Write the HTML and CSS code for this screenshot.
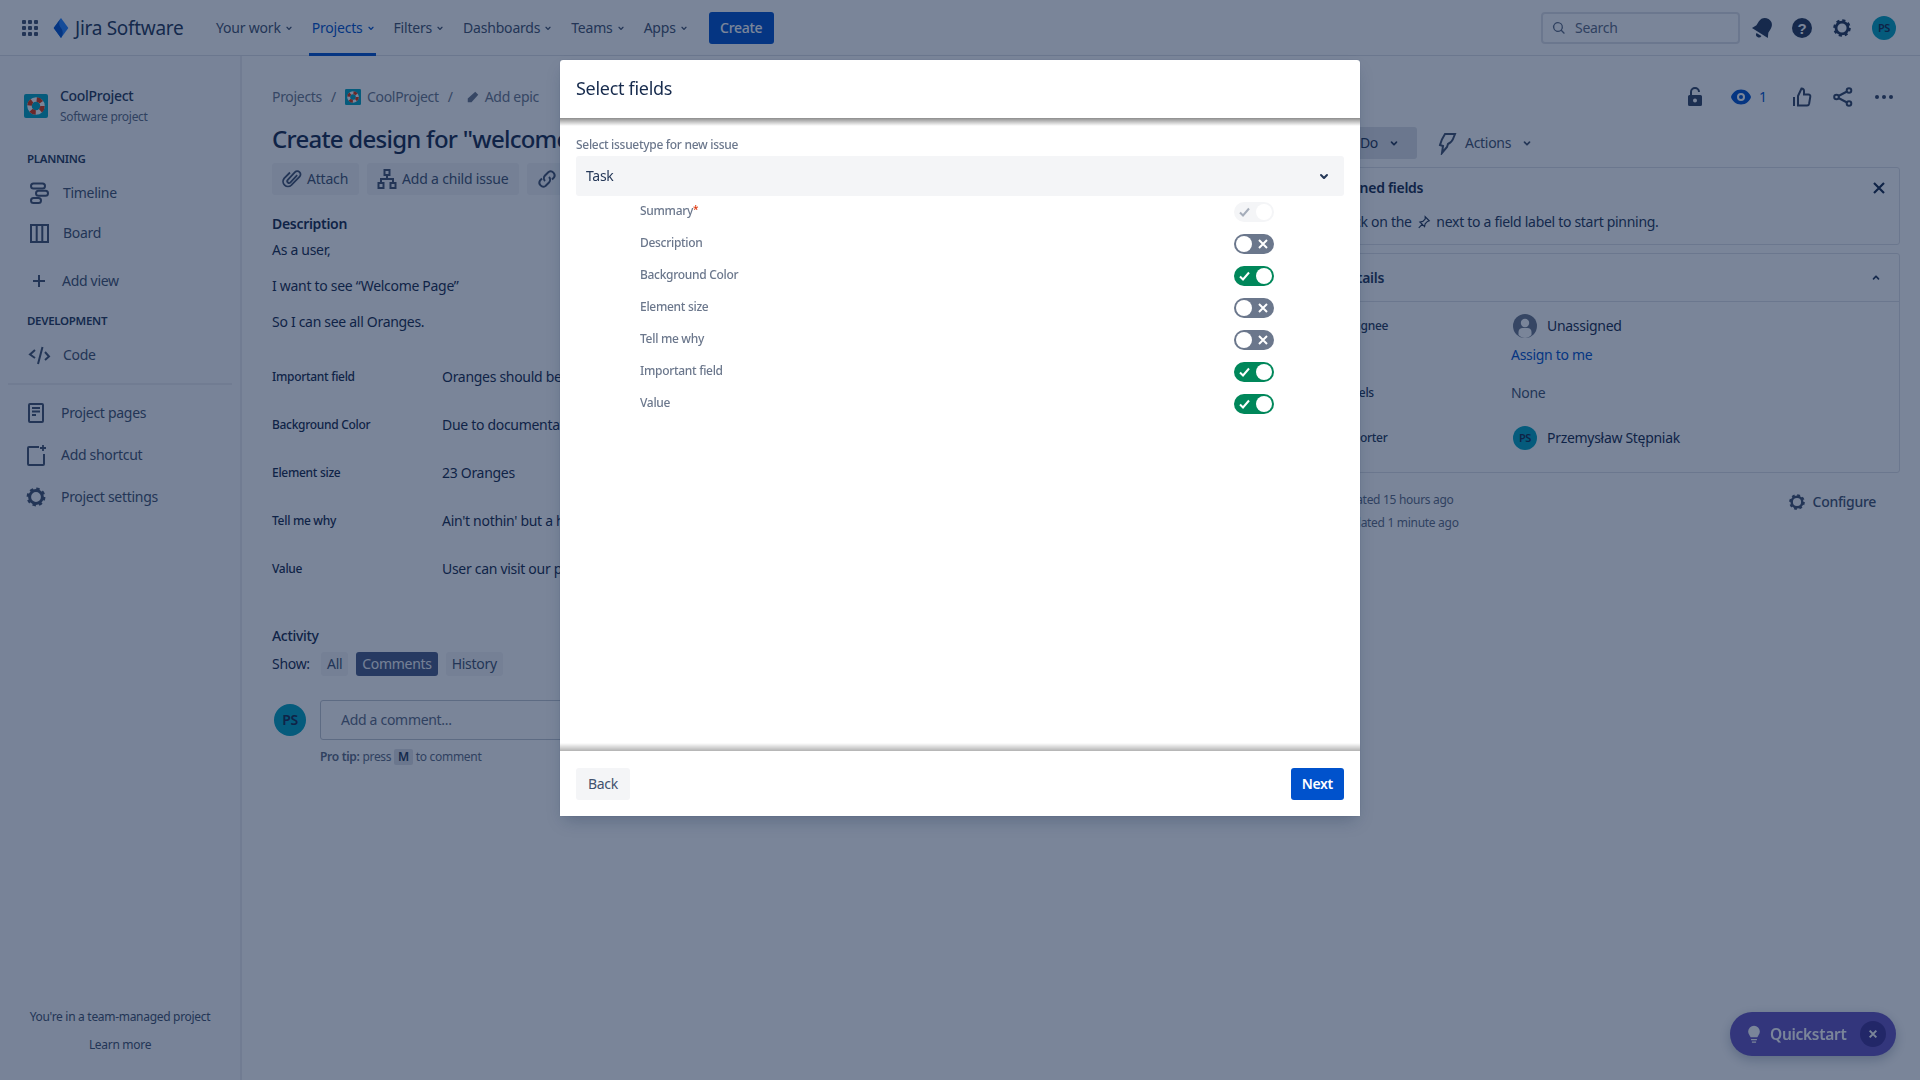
FILE: index.html
```html
<!DOCTYPE html>
<html lang="en">
<head>
  <meta charset="UTF-8">
  <title>Jira Software - Select fields</title>
  <link rel="stylesheet" href="styles.css">
</head>
<body>
  <svg class="defs" aria-hidden="true">
    <symbol id="i-chevron" viewBox="0 0 24 24"><path d="M8.3 10.3a1 1 0 0 0 0 1.4l2.9 3c.2.2.5.3.8.3s.6-.1.8-.3l2.9-3a1 1 0 0 0 0-1.4 1 1 0 0 0-1.4 0L12 12.6l-2.3-2.3a1 1 0 0 0-1.4 0z" fill="currentColor"/></symbol>
    <symbol id="i-gear" viewBox="0 0 24 24"><circle cx="12" cy="12" r="6.4" fill="none" stroke="currentColor" stroke-width="3"/><circle cx="12" cy="12" r="8.2" fill="none" stroke="currentColor" stroke-width="2.4" stroke-dasharray="3.4 3.04"/></symbol>
    <symbol id="i-project" viewBox="0 0 24 24"><rect width="24" height="24" rx="2" fill="#00A3BF"/><circle cx="12" cy="12" r="6.5" fill="none" stroke="#fff" stroke-width="4.5"/><circle cx="12" cy="12" r="6.5" fill="none" stroke="#DE350B" stroke-width="4.5" stroke-dasharray="5.2 5"/></symbol>
  </svg>

  <header class="topbar">
    <svg class="apps" viewBox="0 0 16 16" width="16" height="16"><g fill="currentColor"><rect width="4" height="4" rx="1"/><rect x="6" width="4" height="4" rx="1"/><rect x="12" width="4" height="4" rx="1"/><rect y="6" width="4" height="4" rx="1"/><rect x="6" y="6" width="4" height="4" rx="1"/><rect x="12" y="6" width="4" height="4" rx="1"/><rect y="12" width="4" height="4" rx="1"/><rect x="6" y="12" width="4" height="4" rx="1"/><rect x="12" y="12" width="4" height="4" rx="1"/></g></svg>
    <div class="brand">
      <svg viewBox="0 0 18 24" width="18" height="22"><path d="M9 1 17 12 9 23 1 12z" fill="#2684FF"/><path d="M9 1 1 12l8 11c2-3 3-7 0-11-3-4-2-8 0-11z" fill="#0052CC"/></svg>
      <span>Jira Software</span>
    </div>
    <nav class="nav">
      <a class="nav-item">Your work<svg class="chev"><use href="#i-chevron"/></svg></a>
      <a class="nav-item active">Projects<svg class="chev"><use href="#i-chevron"/></svg></a>
      <a class="nav-item">Filters<svg class="chev"><use href="#i-chevron"/></svg></a>
      <a class="nav-item">Dashboards<svg class="chev"><use href="#i-chevron"/></svg></a>
      <a class="nav-item">Teams<svg class="chev"><use href="#i-chevron"/></svg></a>
      <a class="nav-item">Apps<svg class="chev"><use href="#i-chevron"/></svg></a>
    </nav>
    <button class="btn-create">Create</button>
    <div class="top-right">
      <div class="search">
        <svg viewBox="0 0 24 24" width="16" height="16"><path d="M16.4 15.1l4 4a1 1 0 0 1-1.4 1.4l-4-4a7.5 7.5 0 1 1 1.4-1.4zM10.5 16a5.5 5.5 0 1 0 0-11 5.5 5.5 0 0 0 0 11z" fill="currentColor"/></svg>
        <span>Search</span>
      </div>
      <svg class="top-icon bell" viewBox="0 0 24 24"><g transform="rotate(32 12 12)" fill="currentColor"><path d="M12 3c-3.500 0-6 2.500-6 6v4l-2 4h16l-2-4V9c0-3.500-2.500-6-6-6z"/><path d="M9.500 18.500a2.500 2.500 0 0 0 5 0z"/></g></svg>
      <svg class="top-icon" viewBox="-2 -2 28 28"><circle cx="12" cy="12" r="10" fill="currentColor"/><text x="12" y="17.500" class="help-mark">?</text></svg>
      <svg class="top-icon gear" viewBox="-3 -3 30 30"><use href="#i-gear" width="24" height="24"/></svg>
      <div class="avatar small">PS</div>
    </div>
  </header>

  <div class="page">
    <aside class="sidebar">
      <div class="project">
        <svg width="24" height="24"><use href="#i-project"/></svg>
        <div>
          <div class="project-name">CoolProject</div>
          <div class="project-type">Software project</div>
        </div>
      </div>
      <div class="side-title">PLANNING</div>
      <a class="side-item">
        <svg viewBox="0 0 24 24" width="24" height="24"><g fill="none" stroke="currentColor" stroke-width="2"><rect x="4" y="2.500" width="14" height="5" rx="2.500"/><rect x="9" y="9.800" width="12" height="5" rx="2.500"/><rect x="4" y="17" width="10" height="5" rx="2.500"/></g></svg>
        Timeline
      </a>
      <a class="side-item">
        <svg viewBox="0 0 24 24" width="24" height="24"><path d="M4 4h17v17H4zM9.700 4v17M15.300 4v17" fill="none" stroke="currentColor" stroke-width="2"/></svg>
        Board
      </a>
      <a class="side-item add-view">
        <svg viewBox="0 0 24 24" width="24" height="24"><path d="M12 6v12M6 12h12" stroke="currentColor" stroke-width="2"/></svg>
        Add view
      </a>
      <div class="side-title dev">DEVELOPMENT</div>
      <a class="side-item">
        <svg viewBox="0 0 24 24" width="24" height="24"><path d="M8 7l-5 4.500L8 15M15.500 4 11 21M18 9l4 4.500-4 3.500" fill="none" stroke="currentColor" stroke-width="2"/></svg>
        Code
      </a>
      <div class="side-divider"></div>
      <a class="side-item tall">
        <svg viewBox="0 0 24 24" width="24" height="24"><path d="M6 3h12a1 1 0 0 1 1 1v16a1 1 0 0 1-1 1H6a1 1 0 0 1-1-1V4a1 1 0 0 1 1-1z" fill="none" stroke="currentColor" stroke-width="2"/><path d="M8 7h8M8 10.500h8M8 14h4" stroke="currentColor" stroke-width="1.800"/></svg>
        Project pages
      </a>
      <a class="side-item tall">
        <svg viewBox="0 0 24 24" width="24" height="24"><path d="M15 4H5a1 1 0 0 0-1 1v16a1 1 0 0 0 1 1h14a1 1 0 0 0 1-1V11" fill="none" stroke="currentColor" stroke-width="2"/><path d="M19 2v6M16 5h6" stroke="currentColor" stroke-width="1.800"/></svg>
        Add shortcut
      </a>
      <a class="side-item tall">
        <svg width="24" height="24"><use href="#i-gear"/></svg>
        Project settings
      </a>
      <div class="side-foot">
        <div>You're in a team-managed project</div>
        <div class="learn">Learn more</div>
      </div>
    </aside>

    <main class="issue">
      <div class="crumbs">
        <span>Projects</span><i>/</i>
        <svg width="16" height="16"><use href="#i-project"/></svg><span>CoolProject</span><i class="last">/</i>
        <svg viewBox="0 0 16 16" width="12" height="12"><path d="M11 1l4 4-9 10-5 0 0-5z" fill="currentColor"/></svg><span>Add epic</span>
      </div>
      <h1 class="title">Create design for "welcome page"</h1>
      <div class="actions">
        <button class="btn">
          <svg viewBox="0 0 24 24" width="24" height="24"><path d="M18 8l-7.500 8a2 2 0 0 1-3-2.800l8-8.600a3.600 3.600 0 0 1 5.200 5L11.500 19a5.500 5.500 0 0 1-8-7.500L10 5" fill="none" stroke="currentColor" stroke-width="2" transform="translate(1 1) scale(.9)"/></svg>
          Attach
        </button>
        <button class="btn">
          <svg viewBox="0 0 24 24" width="24" height="24"><path d="M9.500 3h5v5h-5zM3.500 16h5v5h-5zM15.500 16h5v5h-5zM12 8v4M6 16v-4h12v4" fill="none" stroke="currentColor" stroke-width="2"/></svg>
          Add a child issue
        </button>
        <button class="btn">
          <svg viewBox="0 0 24 24" width="24" height="24"><path d="M10 14a4 4 0 0 1 0-5.500l3.500-3.500a4 4 0 0 1 5.500 5.500l-2 2M14 10a4 4 0 0 1 0 5.500L10.500 19A4 4 0 0 1 5 13.500l2-2" fill="none" stroke="currentColor" stroke-width="2"/></svg>
        </button>
      </div>
      <h2 class="desc-title">Description</h2>
      <p class="first">As a user,</p>
      <p>I want to see “Welcome Page”</p>
      <p>So I can see all Oranges.</p>
      <dl class="fields">
        <div class="field"><dt>Important field</dt><dd>Oranges should be visible</dd></div>
        <div class="field"><dt>Background Color</dt><dd>Due to documentation</dd></div>
        <div class="field"><dt>Element size</dt><dd>23 Oranges</dd></div>
        <div class="field"><dt>Tell me why</dt><dd>Ain't nothin' but a heartache</dd></div>
        <div class="field"><dt>Value</dt><dd>User can visit our page</dd></div>
      </dl>
      <h2 class="activity">Activity</h2>
      <div class="show">
        <span>Show:</span>
        <button class="tab">All</button>
        <button class="tab on">Comments</button>
        <button class="tab">History</button>
      </div>
      <div class="comment">
        <div class="avatar">PS</div>
        <div class="comment-box">Add a comment...</div>
      </div>
      <div class="tip"><b>Pro tip:</b> press <kbd>M</kbd> to comment</div>
    </main>

    <section class="panel">
      <div class="panel-icons">
        <svg class="p-icon lock" viewBox="0 0 24 24"><path d="M8 11V7a4 4 0 0 1 8 0" fill="none" stroke="currentColor" stroke-width="2"/><path d="M6.500 10h11a1.500 1.500 0 0 1 1.500 1.500v8a1.500 1.500 0 0 1-1.500 1.500h-11A1.500 1.500 0 0 1 5 19.500v-8A1.500 1.500 0 0 1 6.500 10zM12 13.500a2 2 0 1 0 0 4 2 2 0 0 0 0-4z" fill="currentColor" fill-rule="evenodd"/></svg>
        <div class="watch">
          <svg class="p-icon" viewBox="0 0 24 24"><path d="M12 4.500c5 0 9 3.600 10 7.500-1 3.900-5 7.500-10 7.500S3 15.900 2 12c1-3.900 5-7.500 10-7.500zM12 8a4 4 0 1 0 0 8 4 4 0 0 0 0-8z" fill="#0052CC" fill-rule="evenodd"/><circle cx="12" cy="12" r="2" fill="#0052CC"/></svg>
          <span>1</span>
        </div>
        <svg class="p-icon" viewBox="0 0 24 24"><path d="M8 11l3.500-7.500c1.500 0 2.500 1 2.500 2.500v3.500h4.500c1.200 0 2 1 1.800 2.200l-1.200 7c-.2 1-1 1.800-2 1.800H8zM4 12v9" fill="none" stroke="currentColor" stroke-width="2"/></svg>
        <svg class="p-icon" viewBox="0 0 24 24"><circle cx="18" cy="5.500" r="2.300" fill="none" stroke="currentColor" stroke-width="2"/><circle cx="5.500" cy="12" r="2.300" fill="none" stroke="currentColor" stroke-width="2"/><circle cx="18" cy="18.500" r="2.300" fill="none" stroke="currentColor" stroke-width="2"/><path d="M7.500 11l8.500-4.500M7.500 13l8.500 4.500" stroke="currentColor" stroke-width="2"/></svg>
        <svg class="p-icon" viewBox="0 0 24 24"><circle cx="5" cy="12" r="2" fill="currentColor"/><circle cx="12" cy="12" r="2" fill="currentColor"/><circle cx="19" cy="12" r="2" fill="currentColor"/></svg>
      </div>
      <div class="status-row">
        <button class="status">To Do<svg class="chev big"><use href="#i-chevron"/></svg></button>
        <div class="act">
          <svg viewBox="0 0 24 24" width="24" height="24"><path d="M10 3h10l-2 5c-1 3-3 4-5 5l-1 3-5 6 1-7-3-1c1-4 3-8 5-11z" fill="none" stroke="currentColor" stroke-width="2"/></svg>
          Actions<svg class="chev big"><use href="#i-chevron"/></svg>
        </div>
      </div>
      <div class="box pinned">
        <div class="box-head">
          <b>Pinned fields</b>
          <svg viewBox="0 0 24 24" width="20" height="20"><path d="M6 6l12 12M18 6 6 18" stroke="currentColor" stroke-width="2.600"/></svg>
        </div>
        <div class="pin-text">Click on the
          <svg viewBox="0 0 24 24" width="14" height="14"><path d="M14 3l7 7-3 1-4 4-1 5-4-4-6 6 6-6-4-4 5-1 4-4z" fill="none" stroke="currentColor" stroke-width="2"/></svg>
          next to a field label to start pinning.</div>
      </div>
      <div class="box details">
        <div class="details-head">
          <b>Details</b>
          <svg class="flip" viewBox="0 0 24 24" width="20" height="20"><use href="#i-chevron"/></svg>
        </div>
        <div class="d-row assignee">
          <span class="d-label">Assignee</span>
          <span class="who">
            <svg viewBox="0 0 24 24" width="24" height="24"><circle cx="12" cy="12" r="12" fill="#6B778C"/><circle cx="12" cy="9" r="4.200" fill="#fff"/><path d="M5.500 21v-3c0-2.500 2-4 4-4h5c2 0 4 1.500 4 4v3c-2 2-4 3-6.500 3s-4.500-1-6.500-3z" fill="#fff"/></svg>
            Unassigned
          </span>
        </div>
        <a class="assign">Assign to me</a>
        <div class="d-row labels"><span class="d-label">Labels</span><span class="none">None</span></div>
        <div class="d-row reporter">
          <span class="d-label">Reporter</span>
          <span class="who"><span class="avatar small">PS</span>Przemysław Stępniak</span>
        </div>
      </div>
      <div class="dates">
        <div>
          <div>Created 15 hours ago</div>
          <div class="updated">Updated 1 minute ago</div>
        </div>
        <div class="configure"><svg width="20" height="20"><use href="#i-gear"/></svg>Configure</div>
      </div>
    </section>
  </div>

  <div class="quickstart">
    <svg viewBox="0 0 24 24" width="20" height="24"><path d="M12 2a7 7 0 0 0-7 7c0 3 2 4.500 3 7h8c1-2.500 3-4 3-7a7 7 0 0 0-7-7zM8.500 18h7v1.500h-7zM9.500 21h5v1.500h-5z" fill="currentColor"/></svg>
    <span>Quickstart</span>
    <div class="q-close"><svg viewBox="0 0 24 24" width="16" height="16"><path d="M7 7l10 10M17 7 7 17" stroke="currentColor" stroke-width="3"/></svg></div>
  </div>

  <div class="overlay"></div>

  <div class="modal">
    <div class="modal-head">Select fields</div>
    <div class="modal-body">
      <label class="select-label">Select issuetype for new issue</label>
      <div class="select">Task<svg width="24" height="24"><use href="#i-chevron"/></svg></div>
      <div class="toggle-row"><span>Summary<em>*</em></span><div class="toggle disabled"><svg viewBox="0 0 16 16"><path d="M3 8.500l3 3 6-7"/></svg></div></div>
      <div class="toggle-row"><span>Description</span><div class="toggle off"><svg viewBox="0 0 16 16"><path d="M4 4l8 8M12 4l-8 8"/></svg></div></div>
      <div class="toggle-row"><span>Background Color</span><div class="toggle on"><svg viewBox="0 0 16 16"><path d="M3 8.500l3 3 6-7"/></svg></div></div>
      <div class="toggle-row"><span>Element size</span><div class="toggle off"><svg viewBox="0 0 16 16"><path d="M4 4l8 8M12 4l-8 8"/></svg></div></div>
      <div class="toggle-row"><span>Tell me why</span><div class="toggle off"><svg viewBox="0 0 16 16"><path d="M4 4l8 8M12 4l-8 8"/></svg></div></div>
      <div class="toggle-row"><span>Important field</span><div class="toggle on"><svg viewBox="0 0 16 16"><path d="M3 8.500l3 3 6-7"/></svg></div></div>
      <div class="toggle-row"><span>Value</span><div class="toggle on"><svg viewBox="0 0 16 16"><path d="M3 8.500l3 3 6-7"/></svg></div></div>
    </div>
    <div class="modal-foot">
      <button class="btn-back">Back</button>
      <button class="btn-next">Next</button>
    </div>
  </div>
</body>
</html>
```

FILE: styles.css
```css
* {
  box-sizing: border-box;
}
html, body {
  height: 100%;
}
body {
  margin: 0;
  overflow: hidden;
  background: #fff;
  color: #172b4d;
  font-family: "Noto Sans", sans-serif;
  font-size: 14px;
  line-height: 20px;
  letter-spacing: -0.3px;
}
button {
  font: inherit;
  letter-spacing: inherit;
  border: 0;
}
.defs {
  display: none;
}
.chev {
  width: 16px;
  height: 16px;
  flex: none;
}
.chev.big {
  width: 20px;
  height: 20px;
}

/* top bar */
.topbar {
  height: 56px;
  display: flex;
  align-items: center;
  padding-left: 22px;
  padding-right: 24px;
  border-bottom: 1px solid #dfe1e6;
  color: #42526e;
}
.apps {
  flex: none;
}
.brand {
  display: flex;
  align-items: center;
  gap: 5px;
  margin-left: 14px;
  width: 160px;
  font-size: 19px;
  color: #253858;
}
.nav {
  display: flex;
  height: 56px;
  gap: 4px;
}
.nav-item {
  display: flex;
  align-items: center;
  padding-left: 3px;
  margin: 0 10px 0 1px;
  color: #42526e;
  letter-spacing: -0.2px;
  position: relative;
}
.nav-item .chev {
  margin-right: -3px;
}
.nav-item.active {
  color: #0052cc;
}
.nav-item.active::after {
  content: "";
  position: absolute;
  left: 0;
  right: 0;
  bottom: 0;
  height: 3px;
  background: #0052cc;
}
.btn-create {
  margin-left: 10px;
  width: 65px;
  height: 32px;
  border-radius: 3px;
  background: #0052cc;
  color: #fff;
  font-weight: 500;
}
.top-right {
  margin-left: auto;
  display: flex;
  align-items: center;
}
.search {
  width: 199px;
  height: 32px;
  display: flex;
  align-items: center;
  gap: 8px;
  padding: 0 8px;
  border: 2px solid #dfe1e6;
  border-radius: 4px;
  margin-right: 9px;
  color: #5e6c84;
}
.top-icon {
  width: 28px;
  height: 28px;
  margin-right: 12px;
  color: #253858;
}
.top-icon.bell {
  margin-right: 11px;
}
.top-icon.gear {
  margin-right: 16px;
}
.help-mark {
  font-family: "Liberation Sans", sans-serif;
  font-size: 15px;
  font-weight: 700;
  fill: #fff;
  text-anchor: middle;
}
.avatar {
  width: 32px;
  height: 32px;
  flex: none;
  border-radius: 50%;
  background: #00a3bf;
  display: flex;
  align-items: center;
  justify-content: center;
  color: #172b4d;
  font-weight: 600;
}
.avatar.small {
  width: 24px;
  height: 24px;
  font-size: 11px;
}

/* layout */
.page {
  display: flex;
  height: calc(100vh - 56px);
}
.sidebar {
  width: 242px;
  flex: none;
  display: flex;
  flex-direction: column;
  background: #fafbfc;
  border-right: 2px solid #ebecf0;
  color: #42526e;
}
.project {
  display: flex;
  gap: 12px;
  padding: 30px 0 0 24px;
  align-items: center;
}
.project-name {
  font-weight: 500;
  color: #253858;
}
.project-type {
  margin-top: 3px;
  font-size: 12px;
  line-height: 16px;
  color: #5e6c84;
}
.side-title {
  margin: 26px 0 6px 27px;
  font-size: 11.5px;
  line-height: 16px;
  font-weight: 600;
  color: #253858;
}
.side-title.dev {
  margin-top: 12px;
}
.side-item {
  height: 40px;
  display: flex;
  align-items: center;
  gap: 12px;
  padding-left: 27px;
}
.side-item.add-view {
  margin-top: 8px;
  gap: 11px;
}
.side-item.tall {
  height: 42px;
  gap: 13px;
  padding-left: 24px;
}
.side-divider {
  height: 2px;
  margin: 8px 8px 7px;
  background: #ebecf0;
}
.side-foot {
  margin-top: auto;
  padding-bottom: 27px;
  text-align: center;
  font-size: 12px;
  line-height: 16px;
}
.learn {
  margin-top: 12px;
}

/* issue */
.issue {
  width: 1088px;
  flex: none;
  overflow: hidden;
  padding: 31px 0 0 30px;
}
.crumbs {
  display: flex;
  align-items: center;
  height: 20px;
  gap: 6px;
  color: #6b778c;
  white-space: nowrap;
}
.crumbs i {
  font-style: normal;
  margin: 0 3px;
}
.crumbs i.last {
  margin-right: 8px;
}
.title {
  margin: 16px 0 8px;
  font-size: 24px;
  line-height: 32px;
  font-weight: 500;
  letter-spacing: -0.75px;
  white-space: nowrap;
}
.actions {
  display: flex;
  gap: 8px;
}
.btn {
  height: 32px;
  display: flex;
  align-items: center;
  gap: 3px;
  padding: 0 11px 0 8px;
  border-radius: 3px;
  background: #f4f5f7;
  color: #42526e;
  letter-spacing: -0.2px;
}
.desc-title, .activity {
  font-size: 14px;
  line-height: 20px;
  font-weight: 600;
  margin: 19px 0 0;
}
.activity {
  font-weight: 500;
  margin-top: 33px;
}
.issue p {
  margin: 16px 0 0;
}
.issue p.first {
  margin-top: 6px;
}
.fields {
  margin: 21px 0 0;
}
.field {
  height: 48px;
  display: flex;
  align-items: center;
}
.field dt {
  width: 170px;
  font-size: 12px;
  font-weight: 500;
}
.field dd {
  margin: 0;
}
.show {
  display: flex;
  align-items: center;
  gap: 8px;
  margin-top: 6px;
  height: 24px;
}
.show span {
  width: 41px;
}
.tab {
  height: 24px;
  padding: 0 6px;
  border-radius: 3px;
  background: #f4f5f7;
  color: #42526e;
}
.tab.on {
  background: #4a5c88;
  color: #f4f5f7;
}
.comment {
  display: flex;
  align-items: center;
  gap: 14px;
  margin: 24px 0 0 2px;
}
.comment-box {
  width: 700px;
  height: 40px;
  line-height: 38px;
  padding-left: 20px;
  border: 1px solid #c1c7d0;
  border-radius: 3px;
  color: #5e6c84;
}
.tip {
  margin: 9px 0 0 48px;
  font-size: 12px;
  line-height: 16px;
  color: #5e6c84;
}
.tip b {
  font-weight: 600;
}
kbd {
  display: inline-block;
  padding: 0 4px;
  border-radius: 2px;
  background: #dfe1e6;
  font: inherit;
  font-weight: 600;
  color: #253858;
}

/* right panel */
.panel {
  width: 570px;
  flex: none;
}
.panel-icons {
  display: flex;
  align-items: center;
  justify-content: flex-end;
  gap: 17px;
  margin-top: 29px;
  padding-right: 4px;
  color: #344563;
}
.p-icon {
  width: 24px;
  height: 24px;
  flex: none;
}
.lock {
  margin-right: 5px;
}
.watch {
  display: flex;
  align-items: center;
  gap: 6px;
  width: 44px;
  color: #0052cc;
}
.status-row {
  display: flex;
  align-items: center;
  margin-top: 18px;
  height: 32px;
  color: #42526e;
}
.status {
  width: 87px;
  height: 32px;
  display: flex;
  align-items: center;
  justify-content: flex-end;
  gap: 6px;
  padding-right: 13px;
  border-radius: 3px;
  background: #dfe1e6;
  color: #253858;
}
.act {
  display: flex;
  align-items: center;
  gap: 6px;
  margin-left: 18px;
}
.box {
  border: 1px solid #dfe1e6;
  border-radius: 3px;
  margin-top: 8px;
}
.pinned {
  height: 78px;
  padding: 10px 10px 0 8px;
}
.box-head {
  display: flex;
  justify-content: space-between;
  align-items: center;
  height: 20px;
  font-size: 14px;
}
.box-head b, .details-head b {
  font-weight: 600;
}
.pin-text {
  margin-top: 14px;
  color: #253858;
}
.pin-text svg {
  vertical-align: -2px;
  margin: 0 2px;
}
.details {
  height: 220px;
}
.details-head {
  height: 48px;
  display: flex;
  align-items: center;
  justify-content: space-between;
  padding: 0 13px 0 8px;
  border-bottom: 1px solid #dfe1e6;
  color: #253858;
}
.flip {
  transform: rotate(180deg);
}
.d-row {
  display: flex;
  align-items: center;
  padding-left: 8px;
}
.d-label {
  width: 172px;
  font-size: 12px;
  font-weight: 500;
  color: #253858;
}
.who {
  display: flex;
  align-items: center;
  gap: 10px;
  padding-left: 2px;
}
.assignee {
  margin-top: 12px;
  height: 24px;
}
.assign {
  display: block;
  margin: 7px 0 0 180px;
  color: #0052cc;
}
.labels {
  margin-top: 18px;
  height: 20px;
}
.none {
  color: #42526e;
}
.reporter {
  margin-top: 23px;
  height: 24px;
}
.dates {
  display: flex;
  justify-content: space-between;
  padding: 19px 24px 0 8px;
  font-size: 12px;
  line-height: 16px;
  color: #5e6c84;
}
.updated {
  margin-top: 7px;
}
.configure {
  display: flex;
  align-items: center;
  gap: 6px;
  height: 20px;
  font-size: 14px;
  font-weight: 500;
  color: #42526e;
}

/* things over the page */
.quickstart {
  position: fixed;
  right: 24px;
  bottom: 24px;
  width: 166px;
  height: 44px;
  display: flex;
  align-items: center;
  padding-left: 14px;
  border-radius: 22px;
  background: #6554c0;
  color: #fff;
  font-size: 15.5px;
  font-weight: 600;
  box-shadow: 0 4px 12px rgba(9, 30, 66, 0.25);
}
.quickstart span {
  margin-left: 6px;
}
.q-close {
  margin-left: auto;
  margin-right: 10px;
  width: 26px;
  height: 26px;
  border-radius: 50%;
  background: #403294;
  display: flex;
  align-items: center;
  justify-content: center;
}
.overlay {
  position: fixed;
  inset: 0;
  background: rgba(9, 30, 66, 0.54);
}
.modal {
  position: fixed;
  left: 560px;
  top: 60px;
  width: 800px;
  height: 756px;
  display: flex;
  flex-direction: column;
  background: #fff;
  border-radius: 3px;
  box-shadow: 0 0 1px rgba(9, 30, 66, 0.31), 0 8px 16px -4px rgba(9, 30, 66, 0.25);
}
.modal-head {
  height: 58px;
  flex: none;
  padding: 0 16px 2px;
  display: flex;
  align-items: center;
  font-size: 18px;
  position: relative;
}
.modal-head::after {
  content: "";
  position: absolute;
  left: 0;
  right: 0;
  top: 100%;
  height: 8px;
  background: linear-gradient(rgba(0, 0, 0, 0.45), rgba(0, 0, 0, 0));
}
.modal-body {
  flex: 1;
  padding: 17px 16px 0;
}
.select-label {
  display: block;
  height: 21px;
  line-height: 20px;
  font-size: 12px;
  font-weight: 500;
  color: #6b778c;
}
.select {
  height: 40px;
  display: flex;
  align-items: center;
  justify-content: space-between;
  padding: 0 8px 0 10px;
  border-radius: 3px;
  background: #f4f5f7;
  color: #253858;
}
.toggle-row {
  height: 32px;
  display: flex;
  align-items: center;
  justify-content: space-between;
  padding: 0 70px 0 64px;
  font-size: 12px;
  font-weight: 500;
  color: #6b778c;
}
.toggle-row span {
  margin-bottom: 2px;
}
.toggle-row em {
  font-style: normal;
  font-size: 10px;
  line-height: 0;
  vertical-align: 2px;
  color: #de350b;
}
.toggle {
  width: 40px;
  height: 20px;
  border-radius: 10px;
  position: relative;
  display: flex;
  align-items: center;
}
.toggle::after {
  content: "";
  position: absolute;
  top: 2px;
  width: 16px;
  height: 16px;
  border-radius: 50%;
  background: #fff;
}
.toggle svg {
  width: 16px;
  height: 16px;
  fill: none;
  stroke: #fff;
  stroke-width: 2;
}
.toggle.on {
  background: #00875a;
}
.toggle.off {
  background: #6b778c;
  justify-content: flex-end;
}
.toggle.disabled {
  background: #f4f5f7;
}
.toggle.disabled svg {
  stroke: #a5adba;
}
.toggle.on svg, .toggle.disabled svg {
  margin-left: 3px;
}
.toggle.off svg {
  margin-right: 3px;
}
.toggle.on::after, .toggle.disabled::after {
  right: 2px;
}
.toggle.off::after {
  left: 2px;
}
.modal-foot {
  height: 65px;
  flex: none;
  display: flex;
  align-items: center;
  justify-content: space-between;
  padding: 1px 16px 0;
  position: relative;
  background: #fff;
}
.modal-foot::before {
  content: "";
  position: absolute;
  left: 0;
  right: 0;
  bottom: 100%;
  height: 8px;
  background: linear-gradient(rgba(0, 0, 0, 0), rgba(0, 0, 0, 0.3));
}
.btn-back, .btn-next {
  height: 32px;
  padding: 0 12px;
  border-radius: 3px;
}
.btn-back {
  background: #f4f5f7;
  color: #42526e;
}
.btn-next {
  padding: 0 11px;
  background: #0052cc;
  color: #fff;
  font-weight: 600;
}
```
